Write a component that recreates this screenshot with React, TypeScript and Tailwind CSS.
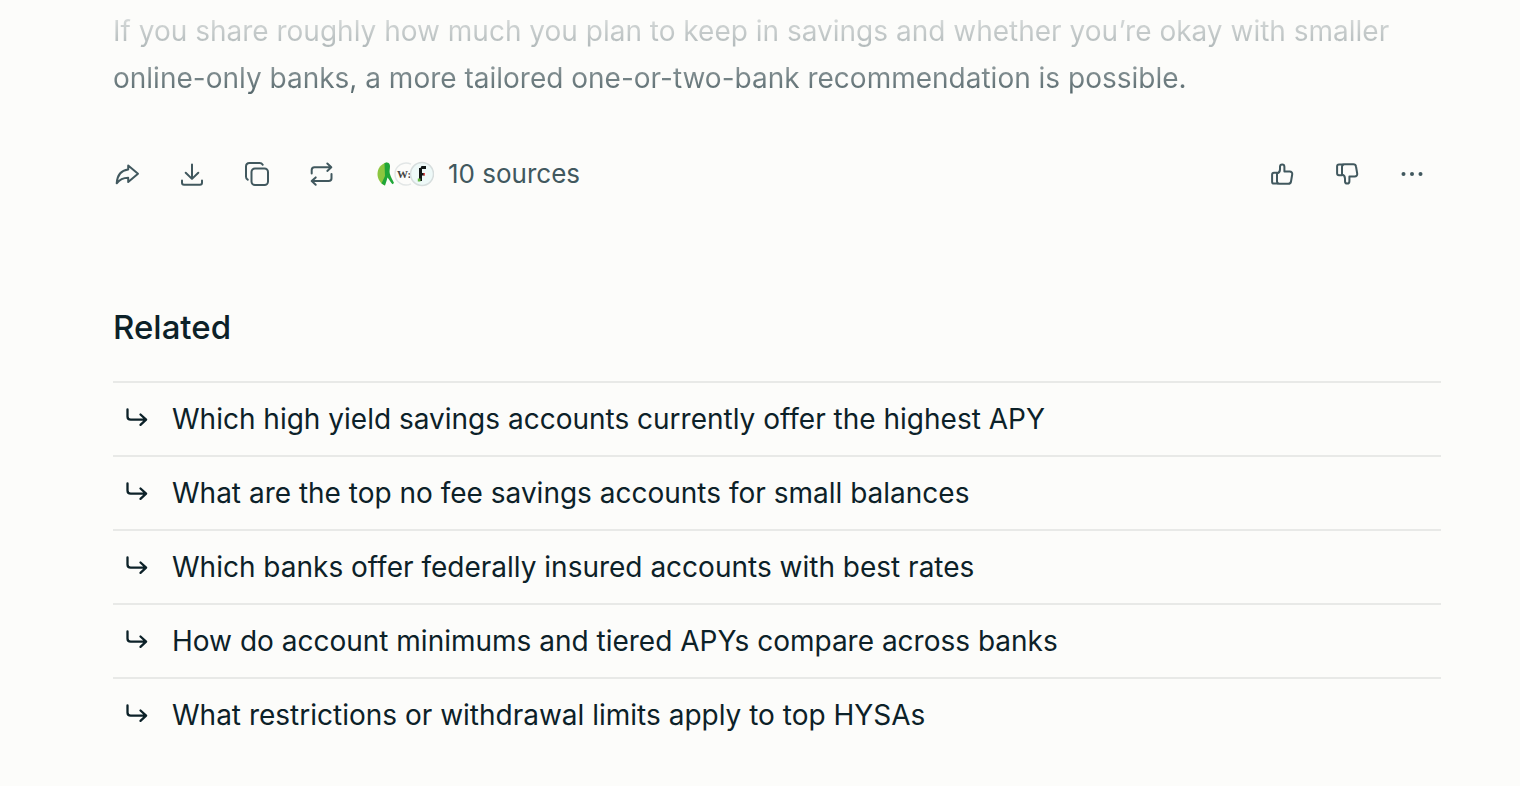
import type { ReactNode } from "react";

const RELATED = [
  "Which high yield savings accounts currently offer the highest APY",
  "What are the top no fee savings accounts for small balances",
  "Which banks offer federally insured accounts with best rates",
  "How do account minimums and tiered APYs compare across banks",
  "What restrictions or withdrawal limits apply to top HYSAs",
];

function Icon({ children }: { children: ReactNode }) {
  return (
    <svg
      viewBox="0 0 28 28"
      className="size-7"
      fill="none"
      stroke="currentColor"
      strokeWidth="2"
      strokeLinecap="round"
      strokeLinejoin="round"
      aria-hidden="true"
    >
      {children}
    </svg>
  );
}

function IconButton({ label, children }: { label: string; children: ReactNode }) {
  return (
    <button type="button" aria-label={label} className="size-7 shrink-0 hover:opacity-70">
      <Icon>{children}</Icon>
    </button>
  );
}

const thumb = (
  <>
    <path d="M9 13.500c2.200-.5 3-2 3-4.200V6.800c0-1.500.9-2.400 2.200-2.400s2.200.9 2.200 2.400v4.700h5.300c1.800 0 2.800 1.200 2.500 3l-1.200 7c-.2 1.400-1.200 2.300-2.700 2.300h-8.800c-1.500 0-2.500-1-2.500-2.500z" />
    <path d="M9 12.800H6c-1.200 0-1.900.7-1.900 1.900v7c0 1.200.7 1.900 1.900 1.900H10" />
  </>
);

function Sources() {
  return (
    <button type="button" className="ml-1 flex items-center gap-[14px] hover:opacity-80">
      {/* overlapping favicons, each one covers the edge of the previous */}
      <svg viewBox="0 0 57 26" className="h-[26px] w-[57px]" aria-hidden="true">
        <path d="M10 1.500C4 2.500 .5 7.500 .5 13s3 9.500 7.500 11.500z" fill="#8cc63f" />
        <path d="M7.500 2c3.500-1.500 5.500.3 5.500 3 0 3-.8 5-.2 7.500.8 3.500 3 6.500 4.200 9.500l-1.500 1.200C13.500 21.500 12.500 18.500 10.500 16.500L9.500 20l-1.500 4.500L4.500 22.500 8 15z" fill="#1fa638" />
        <path d="M34 22.800A11 11 0 1 1 34 3.200" fill="#fcfcfa" stroke="#e2e6e6" strokeWidth="1.500" />
        <text x="20" y="17" fontSize="11" fontWeight="700" fill="#444" className="font-['Liberation_Serif',serif]">W:</text>
        <circle cx="45" cy="13" r="11.500" fill="#eef9f8" stroke="#d6dddd" strokeWidth="1.500" />
        <path d="M42 7h1.500l1-2H49v3h-4v4h2.500v2.500H45V20h-3z" fill="#101616" />
        <path d="M40.800 17.500H43.500v3h-2.700z" fill="#62b83f" />
        <path d="M46.500 12H48v2.500h-1.500z" fill="#e04a4a" />
      </svg>
      <span className="text-[26px] leading-8">10 sources</span>
    </button>
  );
}

export default function App() {
  return (
    <div className="min-h-screen bg-[#fcfcfa] pt-2 pr-[79px] pb-9 pl-[113px] font-[Inter,sans-serif] text-[#0c2128]">
      <p className="bg-linear-to-b from-[#dde0df] from-5% via-[#aeb6b7] via-45% to-[#596a6e] to-90% bg-clip-text text-[28px] leading-[47px] text-transparent">
        If you share roughly how much you plan to keep in savings and whether you’re okay with smaller
        online-only banks, a more tailored one-or-two-bank recommendation is possible.
      </p>

      <div className="mt-[56px] flex h-8 items-center justify-between pr-[15px] text-[#41585e]">
        <div className="flex items-center gap-[37px]">
          <IconButton label="Share">
            <path d="M15.200 9.500V5.400L25 13.700 15.200 22v-4.300C9.800 17.700 6.500 19.500 3.700 23.300 4.200 15.500 8 10.300 15.200 9.500z" />
          </IconButton>
          <IconButton label="Download">
            <path d="M14 4.500v14M7.700 12.700l6.300 6.200 6.300-6.200M4 20.500v2.300c0 1.300.8 2 2 2h16c1.200 0 2-.7 2-2v-2.300" />
          </IconButton>
          <IconButton label="Copy">
            <rect x="8.500" y="8.500" width="16.500" height="16.500" rx="3.500" />
            <path d="M4.700 19.700C3.500 19 3 18 3 16.700V6.500C3 4.500 4.500 3 6.500 3h10.200c1.300 0 2.300.6 3 1.700" />
          </IconButton>
          <IconButton label="Rewrite">
            <path d="M3.700 13.500V10c0-1.700 1.200-2.800 2.800-2.800H23M19.300 3.500l4 3.700-4 3.700M23.500 14v4.300c0 1.700-1.200 2.800-2.800 2.800H4M7.700 17.400l-4 3.700 4 3.700" />
          </IconButton>
          <Sources />
        </div>

        <div className="flex items-center gap-[37px]">
          <IconButton label="Helpful">{thumb}</IconButton>
          <IconButton label="Not helpful">
            <g transform="matrix(1 0 0 -1 0 28)">{thumb}</g>
          </IconButton>
          <IconButton label="More">
            <g fill="currentColor" stroke="none">
              <circle cx="5.500" cy="14" r="2" />
              <circle cx="14" cy="14" r="2" />
              <circle cx="22.500" cy="14" r="2" />
            </g>
          </IconButton>
        </div>
      </div>

      <section className="mt-[117px]">
        <h2 className="text-[33px] leading-10 font-medium">Related</h2>
        <ul className="mt-[34px]">
          {RELATED.map((q) => (
            <li key={q} className="border-t-2 border-[#e8e9e7]">
              <a href="#" className="flex h-[72px] items-center gap-[21px] pl-[10px] text-[28px] hover:opacity-70">
                <Icon>
                  <path d="M4.500 4.500V11.500c0 2 1.200 3.200 3.200 3.200h15M17.500 9.500l5.600 5.200-5.600 5.200" strokeWidth="2.300" />
                </Icon>
                <span>{q}</span>
              </a>
            </li>
          ))}
        </ul>
      </section>
    </div>
  );
}
